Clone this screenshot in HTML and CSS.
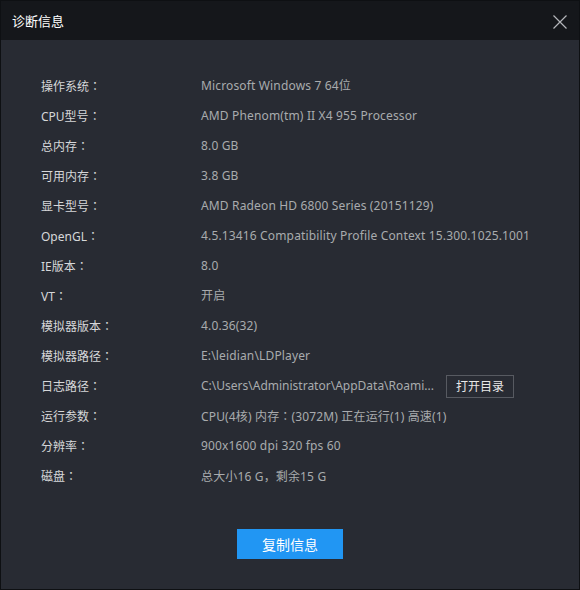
FILE: index.html
```html
<!DOCTYPE html>
<html lang="zh-CN">
<head>
<meta charset="utf-8">
<title>诊断信息</title>
<link rel="stylesheet" href="styles.css">
</head>
<body>
<div class="window">
  <div class="titlebar">
    <span class="title">诊断信息</span>
    <span class="close" aria-label="关闭">
      <svg width="14" height="14" viewBox="0 0 14 14"><path d="M0.5 0.5 L13.5 13.5 M13.5 0.5 L0.5 13.5" stroke="#b4b6ba" stroke-width="1.2" fill="none"/></svg>
    </span>
  </div>
  <div class="content">
    <div class="rows">
      <div class="row"><span class="label">操作系统<span class="p" lang="ja">：</span></span><span class="value">Microsoft Windows 7 64位</span></div>
      <div class="row"><span class="label">CPU型号<span class="p" lang="ja">：</span></span><span class="value">AMD Phenom(tm) II X4 955 Processor</span></div>
      <div class="row"><span class="label">总内存<span class="p" lang="ja">：</span></span><span class="value">8.0 GB</span></div>
      <div class="row"><span class="label">可用内存<span class="p" lang="ja">：</span></span><span class="value">3.8 GB</span></div>
      <div class="row"><span class="label">显卡型号<span class="p" lang="ja">：</span></span><span class="value">AMD Radeon HD 6800 Series (20151129)</span></div>
      <div class="row"><span class="label">OpenGL<span class="p" lang="ja">：</span></span><span class="value">4.5.13416 Compatibility Profile Context 15.300.1025.1001</span></div>
      <div class="row"><span class="label">IE版本<span class="p" lang="ja">：</span></span><span class="value">8.0</span></div>
      <div class="row"><span class="label">VT<span class="p" lang="ja">：</span></span><span class="value">开启</span></div>
      <div class="row"><span class="label">模拟器版本<span class="p" lang="ja">：</span></span><span class="value">4.0.36(32)</span></div>
      <div class="row"><span class="label">模拟器路径<span class="p" lang="ja">：</span></span><span class="value">E:\leidian\LDPlayer</span></div>
      <div class="row"><span class="label">日志路径<span class="p" lang="ja">：</span></span><span class="value path">C:\Users\Administrator\AppData\Roami...</span><button class="open-btn">打开目录</button></div>
      <div class="row"><span class="label">运行参数<span class="p" lang="ja">：</span></span><span class="value">CPU(4核) 内存<span class="p" lang="ja">：</span>(3072M) 正在运行(1) 高速(1)</span></div>
      <div class="row"><span class="label">分辨率<span class="p" lang="ja">：</span></span><span class="value">900x1600 dpi 320 fps 60</span></div>
      <div class="row"><span class="label">磁盘<span class="p" lang="ja">：</span></span><span class="value">总大小16 G<span class="p" lang="ja">，</span>剩余15 G</span></div>
    </div>
    <div class="actions">
      <button class="copy-btn">复制信息</button>
    </div>
  </div>
</div>
</body>
</html>
```
FILE: styles.css
```css
* { box-sizing: border-box; }
html, body { margin: 0; padding: 0; }
body {
  width: 580px;
  height: 590px;
  background: #0e1013;
  font-family: "Noto Sans", "Noto Sans CJK SC", sans-serif;
  font-size: 12px;
}
.window {
  width: 580px;
  height: 590px;
  border: 1px solid #0e1013;
  display: flex;
  flex-direction: column;
  background: #282b33;
}
.titlebar {
  height: 39px;
  flex: none;
  background: #15171b;
  display: flex;
  align-items: center;
  justify-content: space-between;
  padding: 0 11px 0 11px;
}
.title {
  color: #ffffff;
  font-size: 13px;
  line-height: 20px;
  margin-top: 1px;
}
.close {
  display: flex;
  width: 14px;
  height: 14px;
  margin-top: 2px;
  margin-right: 1px;
}
.content {
  flex: 1;
  display: flex;
  flex-direction: column;
  padding: 31px 0 0 40px;
}
.rows {
  display: flex;
  flex-direction: column;
}
.row {
  height: 30px;
  display: flex;
  align-items: center;
}
.label {
  width: 160px;
  color: #d6d7d9;
  line-height: 18px;
}
.p {
  font-family: "Noto Sans CJK JP", sans-serif;
}
.value {
  color: #a9abae;
  line-height: 18px;
  white-space: nowrap;
  letter-spacing: 0.15px;
}
.path { width: 245px; overflow: hidden; letter-spacing: 0; }
.open-btn {
  width: 68px;
  height: 23px;
  margin-left: 0;
  background: #282b33;
  border: 1px solid #575a61;
  color: #e8e8e8;
  font-family: inherit;
  font-size: 12px;
  padding: 0;
}
.actions {
  display: flex;
  justify-content: center;
  padding-top: 38px;
  padding-right: 40px;
}
.copy-btn {
  width: 106px;
  height: 30px;
  background: #2196f3;
  border: none;
  color: #ffffff;
  font-family: inherit;
  font-size: 14px;
  padding: 0;
}
```
